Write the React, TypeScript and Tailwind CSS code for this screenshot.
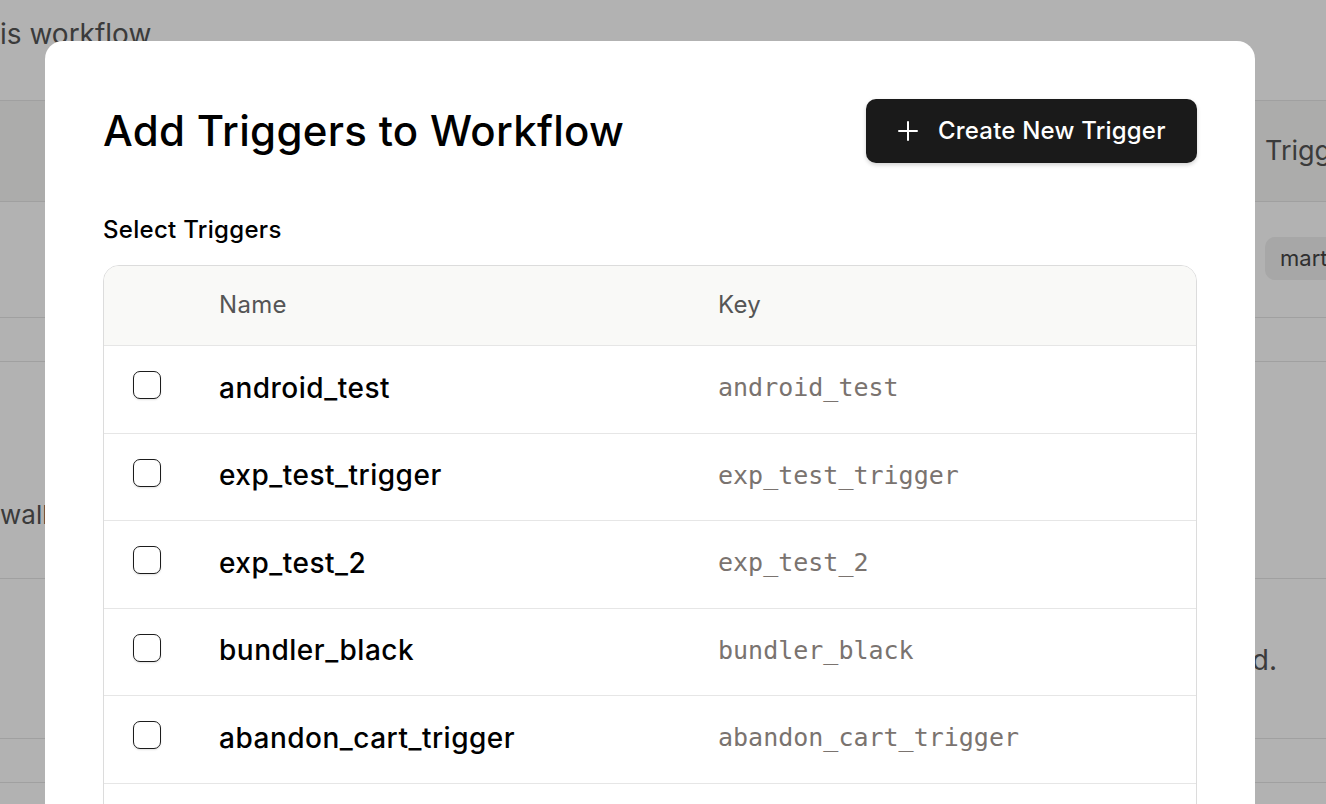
type Trigger = {
  name: string;
  key: string;
};

const triggers: Trigger[] = [
  { name: "android_test", key: "android_test" },
  { name: "exp_test_trigger", key: "exp_test_trigger" },
  { name: "exp_test_2", key: "exp_test_2" },
  { name: "bundler_black", key: "bundler_black" },
  { name: "abandon_cart_trigger", key: "abandon_cart_trigger" },
  { name: "onboarding_flow", key: "onboarding_flow" },
];

function BackgroundPage() {
  return (
    <div className="min-h-screen w-full overflow-hidden bg-white text-[#555] [font-family:Inter,'Noto_Sans',sans-serif]">
      <div className="flex h-[100px] items-start pt-[17px] text-[28px] leading-[34px]">
        <p className="whitespace-nowrap">is workflow</p>
      </div>

      <div className="flex h-[102px] items-center justify-end border-y border-[#e5e5e5] bg-[#f7f7f5] text-[27px]">
        <p className="w-[61px] whitespace-nowrap">Trigg</p>
      </div>

      <div className="flex h-[116px] items-center justify-end border-b border-[#e5e5e5]">
        <div className="w-[61px] pb-[2px]">
          <span className="inline-block whitespace-nowrap rounded-l-[10px] bg-[#efefef] py-[8px] pl-[15px] text-[22px] leading-[27px] text-[#444]">
            mart
          </span>
        </div>
      </div>

      <div className="h-[44px] border-b border-[#e5e5e5]" />

      <div className="flex h-[217px] items-end border-b border-[#e5e5e5] pb-[44px] text-[26px]">
        <p className="whitespace-nowrap">wall</p>
      </div>

      <div className="flex h-[160px] items-center border-b border-[#e5e5e5] pt-[2px] text-[28px]">
        <p className="w-[1277px] whitespace-nowrap text-right">No triggers selected.</p>
      </div>

      <div className="h-[44px] border-b border-[#e5e5e5]" />
      <div className="h-[44px]" />
    </div>
  );
}

function Checkbox() {
  return (
    <span className="block h-[28px] w-[28px] rounded-[7px] border-[1.5px] border-[#1c1c1c] bg-white shadow-[0_1px_2px_rgba(0,0,0,0.12)]" />
  );
}

function PlusIcon() {
  return (
    <svg width="20" height="20" viewBox="0 0 20 20" fill="none" stroke="currentColor" strokeWidth="2" strokeLinecap="round">
      <path d="M10 1v18M1 10h18" />
    </svg>
  );
}

export default function App() {
  return (
    <div className="relative h-[804px] w-full overflow-hidden">
      <BackgroundPage />

      <div className="fixed inset-0 bg-black/30" />

      <div className="fixed inset-0 flex justify-start pl-[45px] pt-[41px] [font-family:Inter,'Noto_Sans',sans-serif]">
        <section className="h-[900px] w-[1210px] rounded-[18px] bg-white px-[58px] pt-[58px] text-black">
          <div className="flex h-[64px] items-center justify-between">
            <h2 className="text-[42px] font-medium leading-[50px] tracking-[0.3px]">
              Add Triggers to Workflow
            </h2>
            <button className="flex h-[64px] w-[331px] items-center gap-[20px] rounded-[10px] bg-[#1a1a1a] pl-[32px] text-[24px] font-medium tracking-[0.2px] text-white shadow-[0_2px_4px_rgba(0,0,0,0.18)]">
              <PlusIcon />
              Create New Trigger
            </button>
          </div>

          <p className="mt-[52px] text-[24px] font-medium leading-[30px] tracking-[0.3px]">
            Select Triggers
          </p>

          <div className="mt-[20px] overflow-hidden rounded-[16px] border border-[#dcdcdc]">
            <div className="flex h-[79px] items-center bg-[#f9f9f7] pb-[2px] text-[24px] tracking-[0.3px] text-[#555]">
              <div className="w-[115px]" />
              <div className="w-[499px]">Name</div>
              <div>Key</div>
            </div>

            {triggers.map((trigger) => (
              <div
                key={trigger.key}
                className="flex h-[87.5px] items-center border-t border-[#e6e6e6] pb-[3px]"
              >
                <div className="w-[115px] pb-[5px] pl-[29px]">
                  <Checkbox />
                </div>
                <div className="w-[499px] text-[28px] font-medium tracking-[0.5px]">
                  {trigger.name}
                </div>
                <div className="text-[25px] text-[#7a736f] [font-family:'DejaVu_Sans_Mono',monospace]">
                  {trigger.key}
                </div>
              </div>
            ))}
          </div>
        </section>
      </div>
    </div>
  );
}
